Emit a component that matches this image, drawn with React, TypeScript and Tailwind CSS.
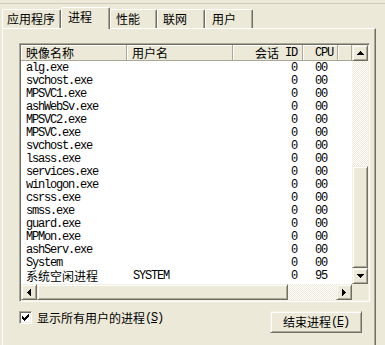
import React from 'react';

const cjk = 'font-[family-name:"Noto_Sans_CJK_SC",sans-serif] text-[12px] leading-[12px]';
const mono = 'font-[family-name:"Liberation_Mono",monospace] text-[12px] leading-[12px] tracking-[-1.2px]';
const raised =
  'border border-t-[#f1efe2] border-l-[#f1efe2] border-r-[#716f64] border-b-[#716f64] shadow-[inset_1px_1px_#fff,inset_-1px_-1px_#aca899] bg-[#ece9d8]';
const checker = 'bg-[image:repeating-conic-gradient(#fff_0_25%,#ece9d8_0_50%)] bg-[length:2px_2px]';

const procs = [
  'alg.exe', 'svchost.exe', 'MPSVC1.exe', 'ashWebSv.exe', 'MPSVC2.exe', 'MPSVC.exe',
  'svchost.exe', 'lsass.exe', 'services.exe', 'winlogon.exe', 'csrss.exe', 'smss.exe',
  'guard.exe', 'MPMon.exe', 'ashServ.exe', 'System',
];

const Arrow = ({ dir }: { dir: 'up' | 'down' | 'left' | 'right' }) => {
  const pts = {
    up: '3.5,0 7,4 0,4',
    down: '0,0 7,0 3.5,4',
    left: '4,0 4,7 0,3.5',
    right: '0,0 0,7 4,3.5',
  }[dir];
  const vertical = dir === 'up' || dir === 'down';
  return (
    <div className={`${raised} w-[16px] h-[16px] flex items-center justify-center`}>
      <svg width={vertical ? 7 : 4} height={vertical ? 4 : 7} shapeRendering="crispEdges">
        <polygon points={pts} fill="#000" />
      </svg>
    </div>
  );
};

const Tab = ({ label, w, pl, active }: { label: string; w: number; pl: number; active?: boolean }) => (
  <div
    className={`${cjk} shrink-0 border-l border-t border-white border-r border-r-[#716f64] rounded-t-[2px] shadow-[inset_-1px_0_#aca899] bg-[#ece9d8] pt-[3px] ${
      active ? 'h-[22px] -mb-[1px] relative z-10' : 'h-[19px]'
    }`}
    style={{ width: w, paddingLeft: pl }}
  >
    {label}
  </div>
);

export default function App() {
  return (
    <div className="w-[385px] h-[345px] overflow-hidden bg-[#ece9d8] text-black">
      <div className="h-[4px] border-b border-[#cfccbd]" />
      <div className="h-[3px]" />

      {/* tabs */}
      <div className="relative z-10 flex items-end h-[21px] pl-[2px]">
        <Tab label="应用程序" w={59} pl={4} />
        <Tab label="进程" w={49} pl={6} active />
        <Tab label="性能" w={47} pl={5} />
        <Tab label="联网" w={48} pl={5} />
        <Tab label="用户" w={48} pl={6} />
      </div>

      {/* panel */}
      <div className="ml-[2px] w-[374px] h-[330px] border-l border-t border-white border-r border-r-[#716f64] shadow-[inset_-1px_0_#aca899]">
        <div className="ml-[16px] mt-[14px] w-[351px] h-[259px] p-[1px] bg-white border border-t-[#aca899] border-l-[#aca899] border-r-white border-b-white shadow-[inset_1px_1px_#716f64,inset_-1px_-1px_#f1efe2]">
          <div className="grid grid-cols-[331px_16px] grid-rows-[239px_16px]">
            <div className="overflow-hidden bg-white">
              {/* header */}
              <div className="flex h-[16px]">
                {[
                  { w: 106, c: <span className={cjk}>映像名称</span>, cls: 'pl-[5px]' },
                  { w: 106, c: <span className={cjk}>用户名</span>, cls: 'pl-[5px]' },
                  {
                    w: 70,
                    c: (
                      <span className="flex items-center">
                        <span className={cjk}>会话</span>
                        <span className={mono}>&nbsp;ID</span>
                      </span>
                    ),
                    cls: 'justify-end pr-[5px]',
                  },
                  { w: 35, c: <span className={mono}>CPU</span>, cls: 'justify-end pr-[4px]' },
                  { w: 14, c: null, cls: '' },
                ].map((h, i) => (
                  <div
                    key={i}
                    className={`flex items-center shrink-0 h-[16px] bg-[#ece9d8] border-r border-b border-[#aca899] shadow-[inset_1px_1px_#fff] ${h.cls}`}
                    style={{ width: h.w }}
                  >
                    {h.c}
                  </div>
                ))}
              </div>

              {/* rows */}
              {procs.map((p, i) => (
                <div key={i} className={`flex items-center h-[13px] ${mono}`}>
                  <div className="w-[106px] pl-[5px] shrink-0">{p}</div>
                  <div className="w-[106px] shrink-0" />
                  <div className="w-[70px] pr-[6px] text-right shrink-0">0</div>
                  <div className="w-[35px] pr-[11px] text-right shrink-0">00</div>
                </div>
              ))}
              <div className={`flex items-center h-[13px] ${mono}`}>
                <div className="w-[106px] pl-[5px] shrink-0 font-[family-name:'Noto_Sans_CJK_SC',sans-serif] text-[12px] leading-[13px] tracking-normal">
                  系统空闲进程
                </div>
                <div className="w-[106px] pl-[6px] shrink-0">SYSTEM</div>
                <div className="w-[70px] pr-[6px] text-right shrink-0">0</div>
                <div className="w-[35px] pr-[11px] text-right shrink-0">95</div>
              </div>
            </div>

            {/* vertical scrollbar */}
            <div className="flex flex-col">
              <Arrow dir="up" />
              <div className={`h-[105px] ${checker}`} />
              <div className={`${raised} h-[102px]`} />
              <Arrow dir="down" />
            </div>

            {/* horizontal scrollbar */}
            <div className="flex">
              <Arrow dir="left" />
              <div className={`${raised} w-[251px] h-[16px]`} />
              <div className={`w-[48px] h-[16px] ${checker}`} />
              <Arrow dir="right" />
            </div>
            <div className="bg-[#ece9d8]" />
          </div>
        </div>

        {/* bottom row */}
        <div className="ml-[16px] mt-[9px] w-[343px] flex items-start justify-between">
          <label className="flex items-center h-[13px] gap-[5px]">
            <span className="w-[13px] h-[13px] bg-white border border-t-[#aca899] border-l-[#aca899] border-r-white border-b-white shadow-[inset_1px_1px_#716f64,inset_-1px_-1px_#f1efe2] flex items-center justify-center">
              <svg width="7" height="7" viewBox="0 0 7 7" shapeRendering="crispEdges">
                <path d="M0 2h1v1h1v1h1V3h1V2h1V1h1V0h1v3H6v1H5v1H4v1H3v1H2V6H1V5H0z" fill="#000" />
              </svg>
            </span>
            <span className="flex items-center">
              <span className={cjk}>显示所有用户的进程</span>
              <span className={mono}>
                (<span className="underline">S</span>)
              </span>
            </span>
          </label>
          <button className={`${raised} w-[92px] h-[22px] flex items-center justify-center`}>
            <span className={cjk}>结束进程</span>
            <span className={mono}>
              (<span className="underline">E</span>)
            </span>
          </button>
        </div>
      </div>
    </div>
  );
}
